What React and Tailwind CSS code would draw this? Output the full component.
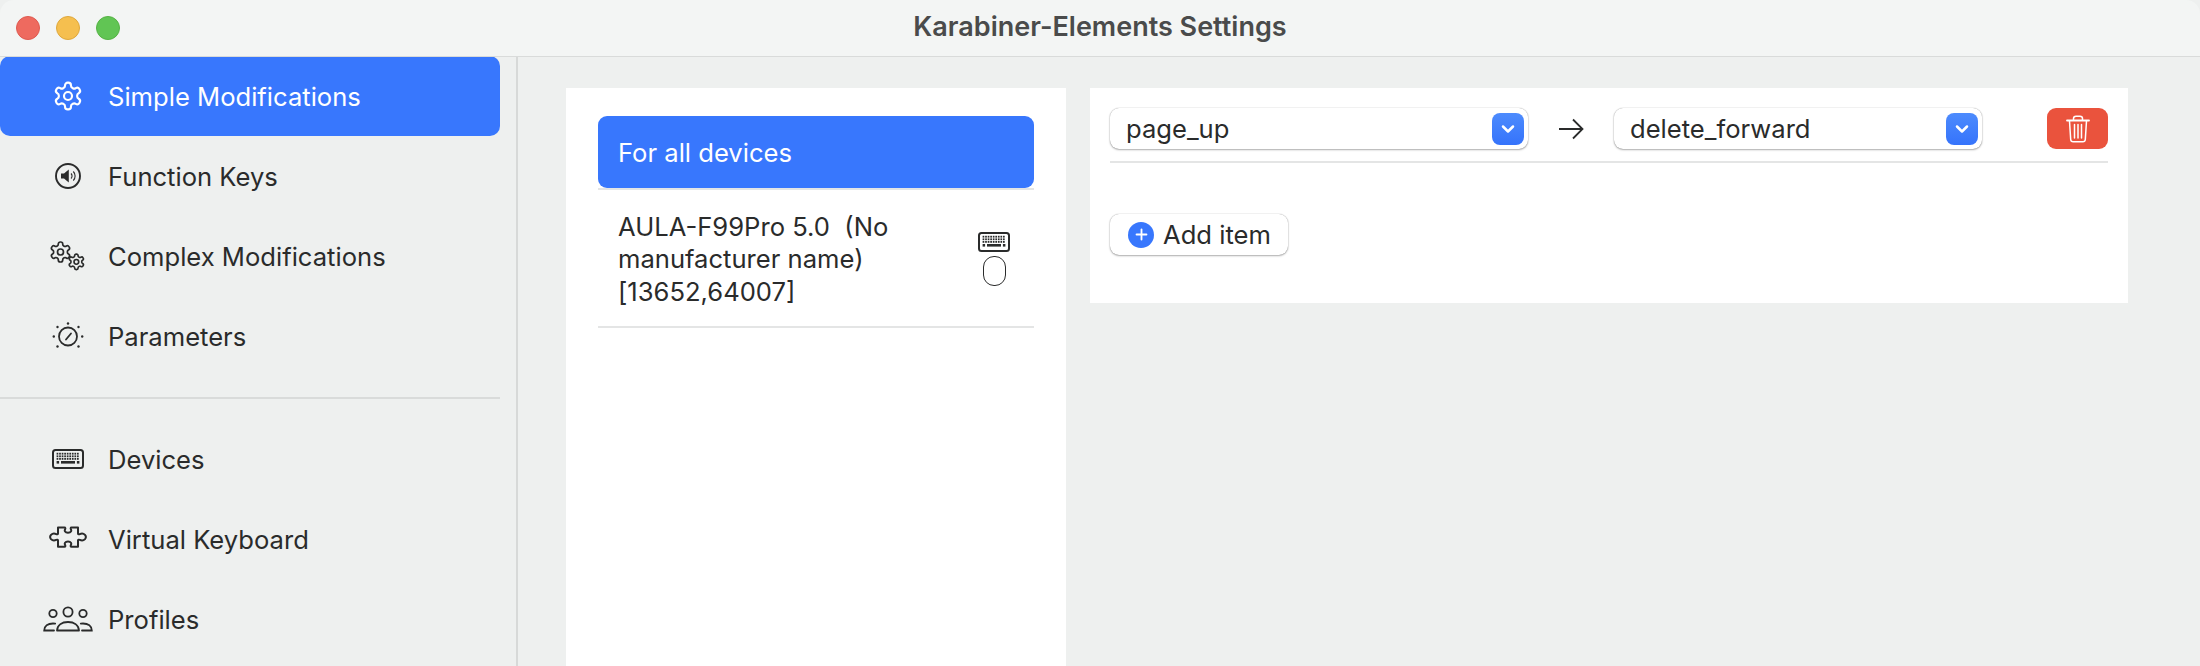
import React from "react";
import { ChevronDown, Plus } from "lucide-react";

const gearPath =
  "M12.22 2h-.44a2 2 0 0 0-2 2v.18a2 2 0 0 1-1 1.73l-.43.25a2 2 0 0 1-2 0l-.15-.08a2 2 0 0 0-2.73.73l-.22.38a2 2 0 0 0 .73 2.73l.15.1a2 2 0 0 1 1 1.72v.51a2 2 0 0 1-1 1.74l-.15.09a2 2 0 0 0-.73 2.73l.22.38a2 2 0 0 0 2.73.73l.15-.08a2 2 0 0 1 2 0l.43.25a2 2 0 0 1 1 1.73V20a2 2 0 0 0 2 2h.44a2 2 0 0 0 2-2v-.18a2 2 0 0 1 1-1.73l.43-.25a2 2 0 0 1 2 0l.15.08a2 2 0 0 0 2.73-.73l.22-.39a2 2 0 0 0-.73-2.73l-.15-.08a2 2 0 0 1-1-1.74v-.5a2 2 0 0 1 1-1.74l.15-.09a2 2 0 0 0 .73-2.73l-.22-.38a2 2 0 0 0-2.73-.73l-.15.08a2 2 0 0 1-2 0l-.43-.25a2 2 0 0 1-1-1.73V4a2 2 0 0 0-2-2z";

function GearIcon() {
  return (
    <svg width="32" height="32" viewBox="0 0 24 24" fill="none" stroke="currentColor" strokeWidth="1.6">
      <path d={gearPath} />
      <circle cx="12" cy="12" r="3" />
    </svg>
  );
}

function SpeakerIcon() {
  return (
    <svg width="28" height="28" viewBox="0 0 28 28" fill="none" stroke="currentColor">
      <circle cx="14" cy="14" r="12" strokeWidth="1.9" />
      <path d="M7 11.5h3l4.8-4v13l-4.8-4H7z" fill="currentColor" stroke="none" />
      <path d="M17 11.5a3.5 3.5 0 0 1 0 5M19.3 9.5a6.5 6.5 0 0 1 0 9" strokeWidth="1.1" />
    </svg>
  );
}

function GearsIcon() {
  return (
    <svg width="36" height="30" viewBox="0 0 36 30" fill="none" stroke="currentColor">
      <g transform="translate(-1.5 -1) scale(1)" strokeWidth="1.7">
        <path d={gearPath} />
        <circle cx="12" cy="12" r="3" />
      </g>
      <g transform="translate(17 11.5) scale(0.78)" strokeWidth="2.1">
        <path d={gearPath} />
        <circle cx="12" cy="12" r="3" />
      </g>
    </svg>
  );
}

function DialIcon() {
  return (
    <svg width="32" height="30" viewBox="0 0 32 30" fill="none" stroke="currentColor">
      <circle cx="16" cy="15.5" r="9" strokeWidth="1.8" />
      <path d="M14 18.5l5-6" strokeWidth="1.8" strokeLinecap="round" />
      <g fill="currentColor" stroke="none">
        <circle cx="16" cy="2.5" r="1.2" />
        <circle cx="5.5" cy="6" r="1.2" />
        <circle cx="26.5" cy="6" r="1.2" />
        <circle cx="1.8" cy="15.5" r="1.2" />
        <circle cx="30.2" cy="15.5" r="1.2" />
        <circle cx="5.5" cy="25.5" r="1.2" />
        <circle cx="26.5" cy="25.5" r="1.2" />
      </g>
    </svg>
  );
}

function KeyboardIcon({ width = 32, height = 20 }) {
  const keys = [];
  for (let row = 0; row < 3; row++) {
    for (let col = 0; col < 9; col++) {
      keys.push(<rect key={row + "-" + col} x={4.6 + col * 2.55} y={3.8 + row * 2.6} width="1.7" height="1.8" />);
    }
  }
  return (
    <svg width={width} height={height} viewBox="0 0 32 20" fill="none" stroke="currentColor">
      <rect x="1" y="1" width="30" height="18" rx="2.5" strokeWidth="2" />
      <g fill="currentColor" stroke="none">
        {keys}
        <rect x="9" y="12" width="14" height="2.6" />
        <rect x="4.6" y="12" width="2.5" height="2.6" />
        <rect x="24.9" y="12" width="2.5" height="2.6" />
      </g>
    </svg>
  );
}

function PuzzleIcon() {
  return (
    <svg width="38" height="26" viewBox="0 0 38 26" fill="none" stroke="currentColor" strokeWidth="2" strokeLinejoin="round">
      <path d="M9 1.5h6.5c1 0 1 1 .6 1.8-.8 1.5-.3 3.4 2.9 3.4s3.7-1.9 2.9-3.4c-.4-.8-.4-1.8.6-1.8H29v6c0 1 1 1 1.8.6 1.5-.8 3.7-.8 5.2.8 1 1.2 1 3 0 4.2-1.5 1.6-3.7 1.6-5.2.8-.8-.4-1.8-.4-1.8.6v6.3H22.5c-1 0-1-1-.6-1.8.8-1.5.3-3.4-2.9-3.4s-3.7 1.9-2.9 3.4c.4.8.4 1.8-.6 1.8H9v-6.3c0-1-1-1-1.8-.6-1.5.8-3.7.8-5.2-.8-1-1.2-1-3 0-4.2 1.5-1.6 3.7-1.6 5.2-.8.8.4 1.8.4 1.8-.6z" />
    </svg>
  );
}

function PeopleIcon() {
  return (
    <svg width="50" height="26" viewBox="0 0 50 26" fill="none" stroke="currentColor" strokeWidth="1.8">
      <circle cx="25" cy="6" r="4.6" />
      <path d="M14 24.5c.3-5.5 5-8.5 11-8.5s10.7 3 11 8.5z" strokeLinejoin="round" />
      <circle cx="10" cy="7.5" r="3.7" />
      <circle cx="40" cy="7.5" r="3.7" />
      <path d="M11 24.5H1.2c0-4.500 3.8-7 8.8-7 .8 0 1.500.1 2.200.2" strokeLinecap="round" />
      <path d="M39 24.5h9.800c0-4.500-3.800-7-8.800-7-.8 0-1.500.1-2.200.2" strokeLinecap="round" />
    </svg>
  );
}

function TrashIcon() {
  return (
    <svg width="24" height="28" viewBox="0 0 24 28" fill="none" stroke="white" strokeWidth="1.5" strokeLinecap="round">
      <path d="M1 5.5h22" strokeWidth="1.8" />
      <path d="M7.5 5V3.5C7.5 2 8.5 1.2 10 1.2h4c1.5 0 2.5.8 2.5 2.3V5" />
      <path d="M3.5 6l1.2 18.5c.1 1.5 1 2.3 2.5 2.3h9.600c1.500 0 2.400-.8 2.500-2.300L20.500 6" />
      <path d="M8.5 9.500v13.500M12 9.500v13.500M15.500 9.500v13.500" />
    </svg>
  );
}

function MappingArrow() {
  return (
    <svg width="26" height="22" viewBox="0 0 26 22" fill="none" stroke="currentColor" strokeWidth="1.8">
      <path d="M1 11h23M15 1.5l9.500 9.500-9.500 9.500" />
    </svg>
  );
}

function NavItem({ icon, label, active }) {
  return (
    <div
      className={
        "flex h-20 w-[500px] items-center rounded-br-[10px] rounded-tr-[10px] " +
        (active ? "rounded-[10px] bg-[#3877fd] text-white" : "text-[#2a2b2b]")
      }
    >
      <div className="flex w-[108px] shrink-0 items-center justify-center pl-[28px]">{icon}</div>
      <span className="pt-[2px] text-[25.6px]">{label}</span>
    </div>
  );
}

function Select({ value, width }) {
  return (
    <div
      className="flex h-[41px] items-center justify-between rounded-[9px] bg-white pl-[16px] pr-[4px] shadow-[0_0_1px_rgba(0,0,0,0.4),0_1px_2px_rgba(0,0,0,0.3)]"
      style={{ width }}
    >
      <span className="text-[25.6px] leading-none text-[#2a2b2b]">{value}</span>
      <div className="flex h-[32px] w-[32px] items-center justify-center rounded-[8px] bg-gradient-to-b from-[#4d8bfd] to-[#3573fb]">
        <ChevronDown size={20} strokeWidth={3} color="white" />
      </div>
    </div>
  );
}

export default function App() {
  return (
    <div className="flex h-[666px] w-[2200px] flex-col overflow-hidden bg-[#eef0ef] font-['Inter','Liberation_Sans',sans-serif]">
      <header className="relative flex h-[57px] shrink-0 items-center justify-center rounded-t-[14px] border-b border-[#d9dbda] bg-[#f3f5f4]">
        <div className="absolute left-[16px] top-[16px] flex gap-[16px]">
          <div className="h-[24px] w-[24px] rounded-full border border-[#df5a50] bg-[#ee6a5f]" />
          <div className="h-[24px] w-[24px] rounded-full border border-[#dfa83c] bg-[#f5bf4f]" />
          <div className="h-[24px] w-[24px] rounded-full border border-[#55b344] bg-[#61c554]" />
        </div>
        <h1 className="pb-[2px] text-[27px] font-semibold text-[#4a4b4b]">Karabiner-Elements Settings</h1>
      </header>

      <div className="-mt-px flex min-h-0 flex-1">
        <aside className="w-[518px] shrink-0 border-r-2 border-[#d7d9d8]">
          <NavItem icon={<GearIcon />} label="Simple Modifications" active />
          <NavItem icon={<SpeakerIcon />} label="Function Keys" />
          <NavItem icon={<GearsIcon />} label="Complex Modifications" />
          <NavItem icon={<DialIcon />} label="Parameters" />
          <div className="mt-[21px] mb-[20px] h-[2px] w-[500px] bg-[#d9dbda]" />
          <NavItem icon={<KeyboardIcon />} label="Devices" />
          <NavItem icon={<PuzzleIcon />} label="Virtual Keyboard" />
          <NavItem icon={<PeopleIcon />} label="Profiles" />
        </aside>

        <main className="flex min-w-0 flex-1 items-start gap-[24px] pl-[48px] pr-[72px] pt-[32px]">
          <section className="h-[600px] w-[500px] shrink-0 bg-white px-[32px] pt-[28px]">
            <div className="flex h-[72px] items-center rounded-[9px] bg-[#3877fd] px-[20px] pt-[2px] text-[25.6px] text-white">
              For all devices
            </div>
            <div className="flex h-[140px] items-center border-y-2 border-[#e4e5e5] pl-[20px]">
              <p className="w-[310px] pt-[3px] text-[25.6px] leading-[32.5px] text-[#2a2b2b]">
                AULA-F99Pro 5.0 &nbsp;(No manufacturer name) [13652,64007]
              </p>
              <div className="ml-auto mr-[24px] mt-[2px] flex flex-col items-center gap-[4px] text-[#2a2b2b]">
                <KeyboardIcon width={32} height={20} />
                <div className="h-[30px] w-[23px] rounded-[11px] border-[1.5px] border-[#2a2b2b]" />
              </div>
            </div>
          </section>

          <section className="h-[215px] min-w-0 flex-1 bg-white px-[20px] pt-[20px]">
            <div className="flex items-center border-b-2 border-[#e4e5e5] pb-[12px]">
              <Select value="page_up" width={418} />
              <div className="flex w-[86px] justify-center text-[#2a2b2b]">
                <MappingArrow />
              </div>
              <Select value="delete_forward" width={368} />
              <button className="ml-auto flex h-[41px] w-[61px] items-center justify-center rounded-[9px] bg-[#ea533d]">
                <TrashIcon />
              </button>
            </div>
            <button className="mt-[51px] flex h-[41px] w-[178px] items-center gap-[9px] rounded-[9px] bg-white pl-[18px] text-[25.6px] text-[#2a2b2b] shadow-[0_0_1px_rgba(0,0,0,0.4),0_1px_2px_rgba(0,0,0,0.3)]">
              <span className="flex h-[26px] w-[26px] items-center justify-center rounded-full bg-[#3877fd]">
                <Plus size={17} strokeWidth={2.6} color="white" />
              </span>
              <span className="pt-[1px]">Add item</span>
            </button>
          </section>
        </main>
      </div>
    </div>
  );
}
